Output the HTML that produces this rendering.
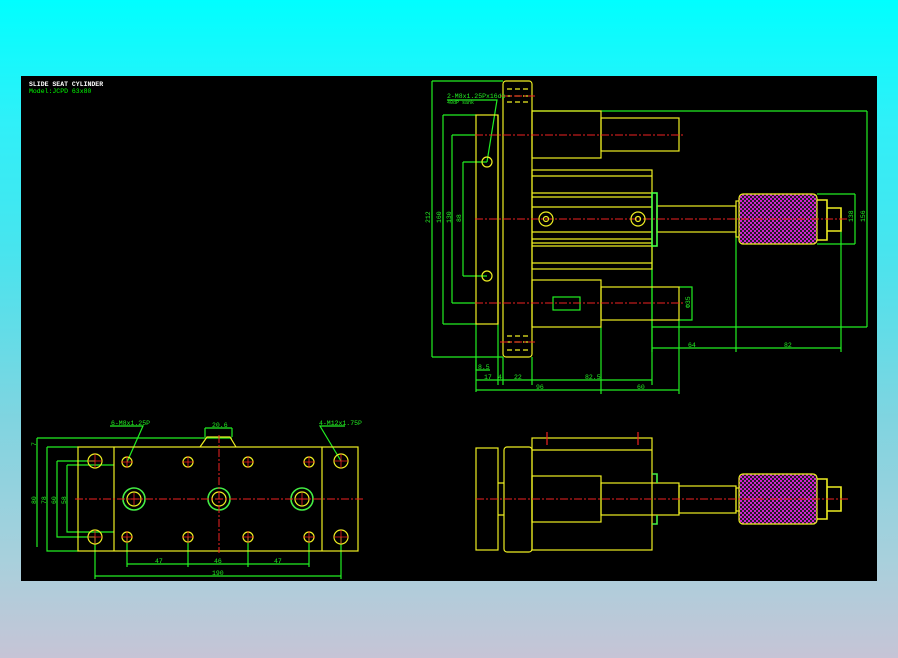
<!DOCTYPE html>
<html><head><meta charset="utf-8"><style>
html,body{margin:0;padding:0}
body{width:898px;height:658px;overflow:hidden;background:linear-gradient(#00ffff 0px,#2ff0f8 120px,#48e4ee 250px,#80d4e0 420px,#a8d0dc 560px,#c6c4d6 658px);}
svg{position:absolute;left:0;top:0}
text{font-family:"Liberation Mono",monospace;}
svg *{stroke-width:1.2}
</style></head><body>
<svg width="898" height="658" viewBox="0 0 898 658">
<defs>
<pattern id="kn" width="4" height="4" patternUnits="userSpaceOnUse">
<rect width="4" height="4" fill="#202020"/>
<rect width="2" height="2" fill="#d020d0"/><rect x="2" y="2" width="2" height="2" fill="#d020d0"/>
</pattern>
</defs>
<rect x="21" y="76" width="856" height="505" fill="#000"/>
<text x="29" y="86" font-size="6.5" font-weight="bold" fill="#fff">SLIDE SEAT CYLINDER</text>
<text x="29" y="93" font-size="6.5" fill="#0f0">Model:JCPD 63x80</text>

<g fill="none" stroke="#2e2">
<path d="M432 81V357M432 81H503M432 357H503"/>
<path d="M443 115V324M443 115H476M443 324H476"/>
<path d="M452 135V303M452 135H476M452 303H476"/>
<path d="M463 162V276M463 162H487M463 276H487"/>
<path d="M867 111V327M532 111H867M652 327H867"/>
<path d="M855 194V244M817 194H855M817 244H855"/>
<path d="M679 287H692V320H679"/>
<path d="M652 246V352M736 232V352M841 231V352M652 348H841"/>
<path d="M476 324V392M498 324V385M503 357V385M532 357V385M601 327V394M679 320V394M652 269V385M476 380H652M476 390H679"/>
<path d="M476 360V370H490"/>
<path d="M487 162L497 100H447"/>
<rect x="553" y="297" width="27" height="13"/>
</g>
<g fill="none" stroke="#ee2">
<rect x="503" y="81" width="29" height="276" rx="3"/>
<rect x="476" y="115" width="22" height="209"/>
<path d="M498 115V324"/>
<rect x="532" y="111" width="69" height="47"/>
<rect x="601" y="118" width="78" height="33"/>
<rect x="532" y="280" width="69" height="47"/>
<rect x="601" y="287" width="78" height="33"/>
<rect x="532" y="170" width="120" height="99"/>
<path d="M532 176H652M532 193H652M532 197H652M532 207H652M532 232H652M532 239H652M532 243H652M532 246H652M532 263H652"/>
<rect x="657" y="206" width="79" height="26"/>
<rect x="736" y="201" width="4" height="36"/>
<path d="M817 200H827V240H817M827 208H841V231H827" style="stroke-width:1.6"/>
</g>
<path d="M507 89H530M507 96H530M507 102H530M507 336H530M507 342H530M507 350H530" stroke="#ee2" stroke-dasharray="5,3"/>
<rect x="652" y="193" width="5" height="53" fill="none" stroke="#4f4" style="stroke-width:1.6"/>
<rect x="739" y="194" width="78" height="50" rx="4" fill="url(#kn)" stroke="#ee2"/>
<g stroke="#e22" fill="none">
<path d="M475 135H683M475 219H848M475 303H683M500 96H535M500 342H535" stroke-dasharray="8,2,2,2" style="stroke-width:1"/>
</g>
<g fill="none" stroke="#ee2">
<circle cx="487" cy="162" r="5"/><circle cx="487" cy="276" r="5"/>
<circle cx="546" cy="219" r="7"/><circle cx="546" cy="219" r="2.5"/>
<circle cx="638" cy="219" r="7"/><circle cx="638" cy="219" r="2.5"/>
</g>
<g font-size="6.5" fill="#2e2">
<text x="447" y="98">2-M8x1.25Px16dp</text>
<text x="447" y="104" font-size="5">40dP sank</text>
<text x="688" y="347">64</text><text x="784" y="347">82</text>
<text x="484" y="379">17</text><text x="498" y="379">4</text><text x="514" y="379">22</text><text x="585" y="379">82.5</text>
<text x="536" y="389">96</text><text x="637" y="389">60</text>
<text x="478" y="369">8.5</text>
<g transform="rotate(-90)">
<text x="-223" y="430">212</text><text x="-223" y="441">160</text><text x="-223" y="451">130</text><text x="-222" y="461">88</text>
<text x="-222" y="865">156</text><text x="-222" y="853">138</text><text x="-308" y="690">Φ35</text>
</g>
</g>

<g fill="none" stroke="#2e2">
<path d="M37 438H232M37 438V547M47 447H78M47 447V551H78M57 461H95M57 461V537H95M67 465H114M67 465V532H114"/>
<path d="M127 537V567M188 537V567M248 537V567M309 537V567M127 564H309"/>
<path d="M95 537V579M341 537V579M95 576H341"/>
<path d="M205 428V437M232 428V437M205 428H232"/>
<path d="M127 462L143 426H110M341 461L320 426H345"/>
</g>
<g fill="none" stroke="#ee2">
<rect x="78" y="447" width="280" height="104"/>
<path d="M114 447V551M322 447V551M200 447L207 437H230L236 447"/>
<circle cx="95" cy="461" r="7"/><circle cx="341" cy="461" r="7"/><circle cx="95" cy="537" r="7"/><circle cx="341" cy="537" r="7"/>
<circle cx="127" cy="462" r="5"/><circle cx="188" cy="462" r="5"/><circle cx="248" cy="462" r="5"/><circle cx="309" cy="462" r="5"/>
<circle cx="127" cy="537" r="5"/><circle cx="188" cy="537" r="5"/><circle cx="248" cy="537" r="5"/><circle cx="309" cy="537" r="5"/>
<circle cx="134" cy="499" r="7"/><circle cx="219" cy="499" r="7"/><circle cx="302" cy="499" r="7"/>
</g>
<g fill="none" stroke="#4e4">
<circle cx="134" cy="499" r="11" style="stroke-width:1.6"/><circle cx="219" cy="499" r="11" style="stroke-width:1.6"/><circle cx="302" cy="499" r="11" style="stroke-width:1.6"/>
</g>
<g stroke="#e22" fill="none">
<path d="M75 499H364M219 435V553" stroke-dasharray="8,2,2,2" style="stroke-width:1"/>
<path d="M88 461H102M95 454V468M334 461H348M341 454V468M88 537H102M95 530V544M334 537H348M341 530V544M121 462H133M127 456V468M182 462H194M188 456V468M242 462H254M248 456V468M303 462H315M309 456V468M121 537H133M127 531V543M182 537H194M188 531V543M242 537H254M248 531V543M303 537H315M309 531V543M128 499H140M134 493V505M296 499H308M302 493V505" style="stroke-width:0.8"/>
</g>
<g font-size="6.5" fill="#2e2">
<text x="111" y="425">6-M8x1.25P</text><text x="319" y="425">4-M12x1.75P</text><text x="212" y="427">20.6</text>
<text x="155" y="563">47</text><text x="214" y="563">46</text><text x="274" y="563">47</text><text x="212" y="575">190</text>
<g transform="rotate(-90)">
<text x="-446" y="36">7</text><text x="-504" y="36">80</text><text x="-504" y="46">78</text><text x="-504" y="56">60</text><text x="-504" y="66">58</text>
</g>
</g>

<g fill="none" stroke="#ee2">
<rect x="476" y="448" width="22" height="102"/>
<rect x="504" y="447" width="28" height="105" rx="3"/>
<path d="M498 483H504M498 515H504"/>
<rect x="532" y="438" width="120" height="112"/>
<path d="M532 450H652"/>
<rect x="532" y="476" width="69" height="46"/>
<rect x="601" y="483" width="78" height="32"/>
<rect x="679" y="486" width="57" height="27"/>
<rect x="736" y="488" width="4" height="23"/>
<path d="M817 479H827V519H817M827 487H841V511H827" style="stroke-width:1.6"/>
</g>
<path d="M652 474H657V483M652 524H657V515" fill="none" stroke="#4e4" style="stroke-width:1.6"/>
<rect x="739" y="474" width="78" height="50" rx="4" fill="url(#kn)" stroke="#ee2"/>
<g stroke="#e22" fill="none">
<path d="M476 499H848" stroke-dasharray="8,2,2,2" style="stroke-width:1"/>
<path d="M547 432V445M638 432V445"/>
</g>
</svg>
</body></html>
